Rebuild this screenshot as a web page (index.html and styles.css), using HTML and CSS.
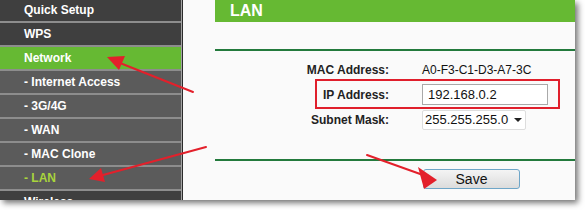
FILE: index.html
```html
<!DOCTYPE html>
<html>
<head>
<meta charset="utf-8">
<link rel="stylesheet" href="styles.css">
</head>
<body>
<div class="frame">
  <nav class="sidebar">
    <div class="item top">Quick Setup</div>
    <div class="item top">WPS</div>
    <div class="item active">Network</div>
    <div class="item sub">- Internet Access</div>
    <div class="item sub">- 3G/4G</div>
    <div class="item sub">- WAN</div>
    <div class="item sub">- MAC Clone</div>
    <div class="item sub current">- LAN</div>
    <div class="item top">Wireless</div>
  </nav>
  <main class="content">
    <div class="panel">
      <div class="header">LAN</div>
      <div class="rule"></div>
      <div class="form">
        <div class="row">
          <div class="label">MAC Address:</div>
          <div class="value">A0-F3-C1-D3-A7-3C</div>
        </div>
        <div class="row">
          <div class="label">IP Address:</div>
          <div class="value"><div class="input">192.168.0.2</div></div>
        </div>
        <div class="row">
          <div class="label">Subnet Mask:</div>
          <div class="value"><div class="select">255.255.255.0<span class="caret"></span></div></div>
        </div>
        <div class="highlight"></div>
      </div>
      <div class="rule rule2"></div>
      <div class="actions"><div class="button">Save</div></div>
    </div>
  </main>
</div>
<svg class="arrows" width="585" height="210" viewBox="0 0 585 210">
  <g stroke="#e3202b" stroke-width="2" fill="none" stroke-linecap="round">
    <line x1="193" y1="92" x2="120" y2="63"/>
    <line x1="206" y1="147" x2="103" y2="175"/>
    <line x1="367" y1="155" x2="423" y2="175"/>
  </g>
  <g fill="#e3202b">
    <polygon points="107,57 125,56 119,70"/>
    <polygon points="89,179 101,168 105,182"/>
    <polygon points="437,180 418,167 424,189"/>
  </g>
</svg>
</body>
</html>
```
FILE: styles.css
```css
html, body {
  margin: 0;
  padding: 0;
  background: #ffffff;
}
body {
  width: 585px;
  height: 210px;
  overflow: hidden;
  position: relative;
  font-family: "Liberation Sans", Arial, sans-serif;
}
.frame {
  width: 575px;
  height: 200px;
  display: flex;
  overflow: hidden;
  box-shadow: 3px 3px 6px rgba(0, 0, 0, 0.55);
  background: #fafafa;
}
.sidebar {
  width: 181px;
  flex: none;
  background: #414141;
  border-right: 1px solid #a3a3a3;
  margin-top: -1px;
}
.item {
  height: 22px;
  line-height: 22px;
  border-bottom: 2px solid #8d8d8d;
  padding-left: 24px;
  color: #ffffff;
  font-size: 12px;
  font-weight: bold;
  white-space: nowrap;
}
.item.top { background: #3f3f3f; }
.item.sub { background: #5b5b5b; }
.item.active { background: #66b933; }
.item.current { color: #a9d43c; }
.content {
  flex: 1;
  border-left: 1px solid #2b2b2b;
  background: #fafafa;
  padding-left: 32px;
}
.panel {
  display: flex;
  flex-direction: column;
}
.header {
  height: 22px;
  line-height: 21px;
  background: #66b933;
  color: #ffffff;
  font-size: 16px;
  font-weight: bold;
  padding-left: 15px;
}
.rule {
  margin-top: 27px;
  height: 0;
  border-top: 2px solid #237a3c;
}
.form {
  position: relative;
  display: flex;
  flex-direction: column;
  padding-top: 6px;
}
.row {
  display: grid;
  grid-template-columns: 174px 1fr;
  column-gap: 33px;
  align-items: center;
  height: 25px;
}
.label {
  text-align: right;
  font-size: 12px;
  font-weight: bold;
  color: #222222;
}
.value {
  font-size: 12px;
  color: #111111;
}
.input {
  width: 119px;
  height: 19px;
  border: 1px solid #a9a9a9;
  background: #ffffff;
  font-size: 13px;
  line-height: 19px;
  padding-left: 5px;
}
.select {
  width: 100px;
  height: 18px;
  border: 1px solid #dddddd;
  border-radius: 2px;
  background: #ffffff;
  font-size: 13px;
  line-height: 18px;
  padding-left: 2px;
  display: flex;
  align-items: center;
  gap: 6px;
}
.caret {
  width: 0;
  height: 0;
  border-left: 4px solid transparent;
  border-right: 4px solid transparent;
  border-top: 4px solid #222222;
}
.highlight {
  position: absolute;
  left: 100px;
  top: 28px;
  width: 241px;
  height: 26px;
  border: 2px solid #e01f2c;
}
.rule2 {
  margin-top: 27px;
}
.actions {
  padding-left: 208px;
  padding-top: 8px;
}
.button {
  width: 95px;
  height: 18px;
  border: 1px solid #6fa6c8;
  border-radius: 3px;
  background: linear-gradient(#f4f4f4, #dcdcdc);
  text-align: center;
  font-size: 14px;
  line-height: 18px;
  color: #111111;
}
.arrows {
  position: absolute;
  left: 0;
  top: 0;
  pointer-events: none;
}
```
